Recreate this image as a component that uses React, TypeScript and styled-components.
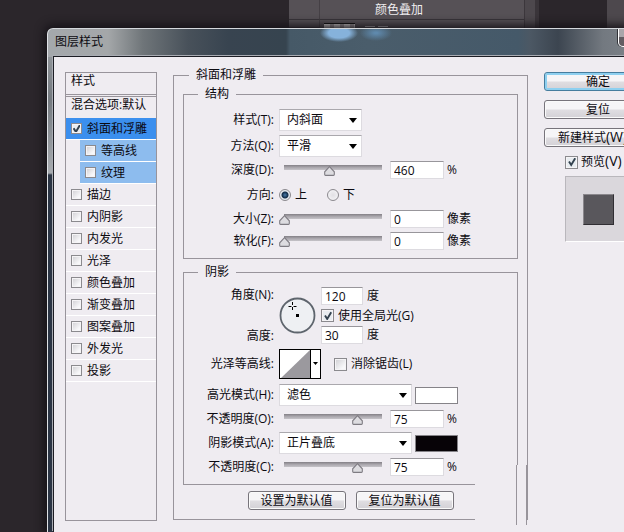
import React, { useState } from "react";
import styled, { createGlobalStyle, css } from "styled-components";

const line = "#98949b";
const surface = "#efecf1";
const ink = "#0c0a10";

const svgUrl = (body: string, w: number, h: number) =>
  `url("data:image/svg+xml,${encodeURIComponent(
    `<svg xmlns='http://www.w3.org/2000/svg' width='${w}' height='${h}' viewBox='0 0 ${w} ${h}'>${body}</svg>`
  )}")`;

const arrowIcon = svgUrl("<path d='M0 0H8L4 5Z' fill='#000'/>", 8, 5);
const tickIcon = svgUrl(
  "<path d='M2 4.5L4.2 8L8.2 1.2' fill='none' stroke='#33424f' stroke-width='1.9'/>",
  10,
  10
);
const thumbIcon = svgUrl(
  "<path d='M5.5 0.7L10.3 5.8V8.6Q10.3 9.4 9.5 9.4H1.5Q0.7 9.4 0.7 8.6V5.8Z' fill='#dddce0' stroke='#7e7b82' stroke-width='1.1'/>",
  11,
  10
);

const Global = createGlobalStyle`
  *, *::before, *::after { box-sizing: border-box; }
  body {
    margin: 0;
    overflow: hidden;
    background: #2b262b;
    color: ${ink};
    font: 12px/16px "Open Sans", "Noto Sans CJK SC", sans-serif;
  }
  button, input, select { font: inherit; color: inherit; margin: 0; }
`;

const Page = styled.div`
  display: flex;
  flex-direction: column;
  min-height: 100vh;
  overflow: hidden;
`;

const Backdrop = styled.div`
  display: flex;
  height: 28px;
  padding-left: 289px;
`;

const LayersPanel = styled.div`
  width: 235px;
  background: #565156;
  display: grid;
  grid-template-columns: 31px 1fr;
  grid-template-rows: 20px 8px;
  color: #f0eef0;
`;

const LayerCell = styled.div`
  border-right: 1px solid #454045;
  border-bottom: 1px solid #39353a;
`;

const LayerName = styled.div`
  padding: 2px 0 0 55px;
  border-bottom: 1px solid #39353a;
`;

const LayerPeek = styled.div`
  display: flex;
  align-items: flex-end;
  gap: 10px;
  padding-left: 4px;
`;

const PeekBlock = styled.div<{ $wide?: boolean }>`
  width: ${(p) => (p.$wide ? 31 : 24)}px;
  height: ${(p) => (p.$wide ? 5 : 3)}px;
  border-top: 1px solid ${(p) => (p.$wide ? "#111" : "#565156")};
  background: ${(p) =>
    p.$wide
      ? "repeating-linear-gradient(90deg, #d8d4d4 0 6px, #a39e9f 6px 10px)"
      : "repeating-linear-gradient(90deg, #c9c6c9 0 10px, transparent 10px 13px) no-repeat 0 0 / 100% 1px"};
`;

const PanelEdge = styled.div`
  width: 15px;
  background: linear-gradient(90deg, #3c373c 0 1px, #4d484d 1px 11px, #3a353a 11px);
`;

const PanelRest = styled.div`
  flex: 1;
  margin-left: 68px;
  background: #4d484d;
`;

const Dialog = styled.main`
  flex: 1;
  display: flex;
  flex-direction: column;
  min-width: 623px;
  margin-left: 47px;
  padding: 0 6px 0 5px;
  border-left: 1px solid #dfe2e6;
  border-top: 1px solid #d4d8dc;
  border-top-left-radius: 6px;
  box-shadow: 0 0 10px 3px #151217;
  background:
    radial-gradient(ellipse 19px 9px at 291px 4px, #86b2db 55%, transparent) no-repeat 0 0 / 100% 28px,
    radial-gradient(ellipse 16px 8px at 328px 4px, #5f89ac 10%, transparent) no-repeat 0 0 / 100% 28px,
    linear-gradient(90deg, #a4a8ac 0, #a4a7a9 60px, #6f7579 95px, #48515a 140px, #384450 180px, #36444f 238px,
      #465967 242px, #4a5d6b 320px, #455969 470px, #4c5864 482px, #3c4550 510px, #737980 555px, #888d92 100%)
      no-repeat 0 0 / 100% 28px,
    linear-gradient(180deg, #8e9398 28px, #747a80 70px, #a7abb0 144px, #2b3545 146px, #2b3545 100%);
`;

const TitleBar = styled.header`
  display: flex;
  justify-content: space-between;
  align-items: flex-start;
  height: 27px;
`;

const Title = styled.h1`
  margin: 5px 0 0 2px;
  font: inherit;
`;

const CloseButton = styled.button`
  width: 46px;
  height: 18px;
  padding: 0;
  border: 1px solid #fff;
  border-top: 0;
  border-radius: 0 0 5px 5px;
  background: linear-gradient(#a9a6aa 50%, #625d62 50%);
  box-shadow: -1px 0 0 #303136;
`;

const Client = styled.div`
  flex: 1;
  display: grid;
  grid-template-columns: 92px minmax(355px, 1fr) 108px;
  align-items: start;
  gap: 16px;
  padding: 10px 12px 11px 11px;
  border: solid #1c1d24;
  border-width: 1px 0 0 1px;
  box-shadow: -1px -1px 0 #a9acb3;
  background: ${surface};
`;

const StyleList = styled.nav`
  align-self: start;
  margin-top: 5px;
  height: calc(100% - 5px);
  border: 1px solid ${line};
`;

const ListHeading = styled.div<{ $ruled?: boolean }>`
  height: ${(p) => (p.$ruled ? 24 : 21)}px;
  padding-left: 5px;
  border-bottom: ${(p) => (p.$ruled ? `3px double ${line}` : "0")};
  white-space: nowrap;
`;

const StyleItem = styled.label<{ $tone?: "active" | "sub" }>`
  display: flex;
  align-items: center;
  gap: 5px;
  height: 22px;
  padding-left: 5px;
  border-bottom: 1px solid #fff;
  white-space: nowrap;
  ${(p) =>
    p.$tone === "active" &&
    css`
      background: #3b8fee;
    `}
  ${(p) =>
    p.$tone === "sub" &&
    css`
      margin-left: 14px;
      background: #8dbcee;
    `}
`;

const Check = styled.input.attrs({ type: "checkbox" })<{ $large?: boolean }>`
  appearance: none;
  flex: none;
  width: ${(p) => (p.$large ? 13 : 11)}px;
  height: ${(p) => (p.$large ? 13 : 11)}px;
  border: 1px solid #8b8a8e;
  background: linear-gradient(135deg, #cfced2, #f8f8fa 75%);
  box-shadow: inset 0 0 0 1px #f5f4f6;
  &:checked {
    background: ${tickIcon} center no-repeat, #e8ecf0;
  }
`;

const Group = styled.fieldset<{ $outer?: boolean }>`
  position: relative;
  min-width: 0;
  margin: 0;
  border: 1px solid ${line};
  padding: ${(p) => (p.$outer ? "3px 9px 9px" : "7px 0 8px")};
`;

const Legend = styled.legend<{ $outer?: boolean }>`
  height: 16px;
  margin-left: ${(p) => (p.$outer ? 6 : 14)}px;
  padding: 0 7px;
`;

const GroupStack = styled.div`
  display: flex;
  flex-direction: column;
  gap: 5px;
`;

const Rows = styled.div`
  display: flex;
  flex-direction: column;
  gap: 4px;
`;

const rowHeights = { field: 18, select: 22, radio: 23, dial: 57, contour: 32 };

const Row = styled.div<{ $kind: keyof typeof rowHeights }>`
  display: grid;
  grid-template-columns: 90px 1fr;
  align-items: center;
  gap: 5px;
  height: ${(p) => rowHeights[p.$kind]}px;
`;

const FieldLabel = styled.label`
  text-align: right;
  white-space: nowrap;
`;

const LabelPair = styled.div`
  display: flex;
  flex-direction: column;
  justify-content: space-between;
  height: 57px;
`;

const Controls = styled.div<{ $gap?: number }>`
  display: flex;
  align-items: center;
  gap: ${(p) => p.$gap ?? 4}px;
`;

const Select = styled.select<{ $wide?: boolean }>`
  appearance: none;
  width: ${(p) => (p.$wide ? 133 : 83)}px;
  height: 22px;
  padding: 0 18px 0 7px;
  border: 1px solid #dddbe0;
  border-top-color: #aaa8ad;
  border-radius: 0;
  background: ${arrowIcon} right 4px center no-repeat, #fff;
`;

const TextField = styled.input<{ $short?: boolean }>`
  width: ${(p) => (p.$short ? 42 : 54)}px;
  height: 18px;
  padding: 0 3px;
  border: 1px solid #dddbe0;
  border-top-color: #98969b;
  background: #fff;
`;

const Slider = styled.input.attrs({ type: "range" })`
  appearance: none;
  width: 108px;
  height: 18px;
  background: transparent;
  &::-webkit-slider-runnable-track {
    height: 18px;
    background: linear-gradient(#838086, #aaa7ad 50%, #c5c3c8) 5px 4px / calc(100% - 10px) 5px no-repeat;
  }
  &::-webkit-slider-thumb {
    appearance: none;
    width: 11px;
    height: 10px;
    margin-top: 5px;
    background: ${thumbIcon} no-repeat;
  }
`;

const Radio = styled.input.attrs({ type: "radio" })`
  appearance: none;
  width: 12px;
  height: 12px;
  border: 1px solid #8b898e;
  border-radius: 50%;
  background: radial-gradient(#e1e0e4, #f8f8fa);
  &:checked {
    background: radial-gradient(circle at center, #4d7cab 0, #1f4467 2px, #142c48 3px, #e6ebf0 4px);
  }
`;

const Choice = styled.label<{ $gap?: number }>`
  display: flex;
  align-items: center;
  gap: ${(p) => p.$gap ?? 4}px;
  white-space: nowrap;
`;

const RadioSet = styled.div`
  display: flex;
  gap: 20px;
`;

const Stack = styled.div`
  display: flex;
  flex-direction: column;
  justify-content: space-between;
  height: 57px;
`;

const ContourButton = styled.button`
  display: flex;
  padding: 0;
  margin-right: 9px;
  border: 0;
  background: none;
`;

const Swatch = styled.button<{ $color: string }>`
  width: 43px;
  height: 17px;
  padding: 0;
  border: 1px solid #858388;
  background: ${(p) => p.$color};
`;

const Footer = styled.div`
  display: flex;
  justify-content: center;
  gap: 10px;
  margin: 6px 0 0;
`;

const PushButton = styled.button<{ $primary?: boolean; $wide?: boolean }>`
  width: ${(p) => (p.$wide ? 108 : 98)}px;
  height: 19px;
  padding: 0;
  border: 1px solid ${(p) => (p.$primary ? "#467d9e" : "#77747b")};
  border-radius: 3px;
  line-height: 16px;
  white-space: nowrap;
  background: linear-gradient(#f6f5f7 45%, #dfdde1 55%, #d3d1d6);
  box-shadow: inset 0 0 0 ${(p) => (p.$primary ? "2px #8ed0f0" : "1px #fafafa")};
`;

const Key = styled.span`
  font-size: 14px;
  line-height: 12px;
`;

const WornCorner = styled.div`
  position: absolute;
  right: 0;
  bottom: -6px;
  width: 52px;
  height: 60px;
  padding-right: 9px;
  border-right: 1px solid ${line};
  background: ${surface};
  pointer-events: none;
  clip-path: polygon(0 18px, 41px 18px, 41px 0, 100% 0, 100% 100%, 0 100%);
  &::before {
    content: "";
    display: block;
    height: 100%;
    border-right: 1px solid ${line};
  }
`;

const Actions = styled.aside`
  display: flex;
  flex-direction: column;
  gap: 7px;
  padding-top: 5px;
`;

const ButtonStack = styled.div`
  display: flex;
  flex-direction: column;
  gap: 9px;
`;

const PreviewGroup = styled.div`
  display: flex;
  flex-direction: column;
  gap: 6px;
  padding-left: 21px;
`;

const Preview = styled.div`
  display: grid;
  place-items: center;
  width: 66px;
  height: 66px;
  border: 1px solid #b9b7bc;
  border-right-color: #fff;
  border-bottom-color: #fff;
  background: #dad7dc;
  &::before {
    content: "";
    width: 31px;
    height: 31px;
    border: 1px solid #8a878c;
    border-right-color: #302e33;
    border-bottom-color: #302e33;
    background: #59575c;
  }
`;

const styles: { name: string; tone?: "active" | "sub"; on?: boolean }[] = [
  { name: "斜面和浮雕", tone: "active", on: true },
  { name: "等高线", tone: "sub" },
  { name: "纹理", tone: "sub" },
  { name: "描边" },
  { name: "内阴影" },
  { name: "内发光" },
  { name: "光泽" },
  { name: "颜色叠加" },
  { name: "渐变叠加" },
  { name: "图案叠加" },
  { name: "外发光" },
  { name: "投影" },
];

function SliderRow({ id, label, initial, max = 100, unit }: { id: string; label: string; initial: number; max?: number; unit: string }) {
  const [value, setValue] = useState(initial);
  return (
    <Row $kind="field">
      <FieldLabel htmlFor={id}>{label}</FieldLabel>
      <Controls $gap={3}>
        <Slider aria-label={label} min={0} max={max} value={value} onChange={(e) => setValue(Number(e.target.value))} />
        <TextField id={id} value={value} onChange={(e) => setValue(Number(e.target.value) || 0)} />
        <span>{unit}</span>
      </Controls>
    </Row>
  );
}

function SelectRow({ id, label, options, swatch }: { id: string; label: string; options: string[]; swatch?: string }) {
  return (
    <Row $kind="select">
      <FieldLabel htmlFor={id}>{label}</FieldLabel>
      <Controls $gap={3}>
        <Select id={id} $wide={Boolean(swatch)}>
          {options.map((o) => (
            <option key={o}>{o}</option>
          ))}
        </Select>
        {swatch && <Swatch type="button" $color={swatch} aria-label={label} />}
      </Controls>
    </Row>
  );
}

function Dial() {
  return (
    <svg width="37" height="38" viewBox="0 0 37 38" aria-hidden="true">
      <circle cx="18.5" cy="18.5" r="17" fill="#eef0f3" stroke="#5e656d" strokeWidth="1.8" />
      <path d="M13.5 5v3M13.5 10v3M9.500 9.500h3M14.500 9.500h3" stroke="#000" />
      <rect x="17" y="17" width="3" height="3" fill="#000" />
    </svg>
  );
}

export default function App() {
  return (
    <Page>
      <Global />
      <Backdrop>
        <LayersPanel>
          <LayerCell />
          <LayerName>颜色叠加</LayerName>
          <LayerCell />
          <LayerPeek>
            <PeekBlock $wide />
            <PeekBlock />
          </LayerPeek>
        </LayersPanel>
        <PanelEdge />
        <PanelRest />
      </Backdrop>
      <Dialog>
        <TitleBar>
          <Title>图层样式</Title>
          <CloseButton type="button" aria-label="关闭" />
        </TitleBar>
        <Client>
          <StyleList>
            <ListHeading $ruled>样式</ListHeading>
            <ListHeading>混合选项:默认</ListHeading>
            {styles.map((s) => (
              <StyleItem key={s.name} $tone={s.tone}>
                <Check defaultChecked={s.on} />
                {s.name}
              </StyleItem>
            ))}
          </StyleList>

          <Group $outer>
            <Legend $outer>斜面和浮雕</Legend>
            <GroupStack>
              <Group>
                <Legend>结构</Legend>
                <Rows>
                  <SelectRow id="style" label="样式(T):" options={["内斜面"]} />
                  <SelectRow id="method" label="方法(Q):" options={["平滑"]} />
                  <SliderRow id="depth" label="深度(D):" initial={460} max={1000} unit="%" />
                  <Row $kind="radio">
                    <FieldLabel as="span">方向:</FieldLabel>
                    <RadioSet>
                      <Choice>
                        <Radio name="direction" defaultChecked />上
                      </Choice>
                      <Choice>
                        <Radio name="direction" />下
                      </Choice>
                    </RadioSet>
                  </Row>
                  <SliderRow id="size" label="大小(Z):" initial={0} unit="像素" />
                  <SliderRow id="soften" label="软化(F):" initial={0} unit="像素" />
                </Rows>
              </Group>
              <Group>
                <Legend>阴影</Legend>
                <Rows>
                  <Row $kind="dial">
                    <LabelPair>
                      <FieldLabel htmlFor="angle">角度(N):</FieldLabel>
                      <FieldLabel htmlFor="altitude">高度:</FieldLabel>
                    </LabelPair>
                    <Controls $gap={5}>
                      <Dial />
                      <Stack>
                        <Controls>
                          <TextField id="angle" $short defaultValue="120" />度
                        </Controls>
                        <Choice>
                          <Check $large defaultChecked />
                          使用全局光(G)
                        </Choice>
                        <Controls>
                          <TextField id="altitude" $short defaultValue="30" />度
                        </Controls>
                      </Stack>
                    </Controls>
                  </Row>
                  <Row $kind="contour">
                    <FieldLabel htmlFor="contour">光泽等高线:</FieldLabel>
                    <Controls>
                      <ContourButton id="contour" type="button">
                        <svg width="42" height="30" viewBox="0 0 42 30" aria-hidden="true">
                          <rect x="0.5" y="0.5" width="41" height="29" fill="#fff" stroke="#000" />
                          <path d="M2 29L31 1V29Z" fill="#9b999e" />
                          <path d="M31.5 1V29" stroke="#000" />
                          <path d="M34 13H39L36.500 16Z" fill="#000" />
                        </svg>
                      </ContourButton>
                      <Choice>
                        <Check $large />
                        消除锯齿(L)
                      </Choice>
                    </Controls>
                  </Row>
                  <SelectRow id="highlight" label="高光模式(H):" options={["滤色"]} swatch="#fff" />
                  <SliderRow id="highlight-opacity" label="不透明度(O):" initial={75} unit="%" />
                  <SelectRow id="shadow" label="阴影模式(A):" options={["正片叠底"]} swatch="#070307" />
                  <SliderRow id="shadow-opacity" label="不透明度(C):" initial={75} unit="%" />
                </Rows>
              </Group>
            </GroupStack>
            <Footer>
              <PushButton type="button">设置为默认值</PushButton>
              <PushButton type="button">复位为默认值</PushButton>
            </Footer>
            <WornCorner />
          </Group>

          <Actions>
            <ButtonStack>
              <PushButton type="button" $wide $primary>
                确定
              </PushButton>
              <PushButton type="button" $wide>
                复位
              </PushButton>
              <PushButton type="button" $wide>
                新建样式<Key>(W)...</Key>
              </PushButton>
            </ButtonStack>
            <PreviewGroup>
              <Choice $gap={3}>
                <Check $large defaultChecked />
                <span>
                  预览<Key>(V)</Key>
                </span>
              </Choice>
              <Preview />
            </PreviewGroup>
          </Actions>
        </Client>
      </Dialog>
    </Page>
  );
}
